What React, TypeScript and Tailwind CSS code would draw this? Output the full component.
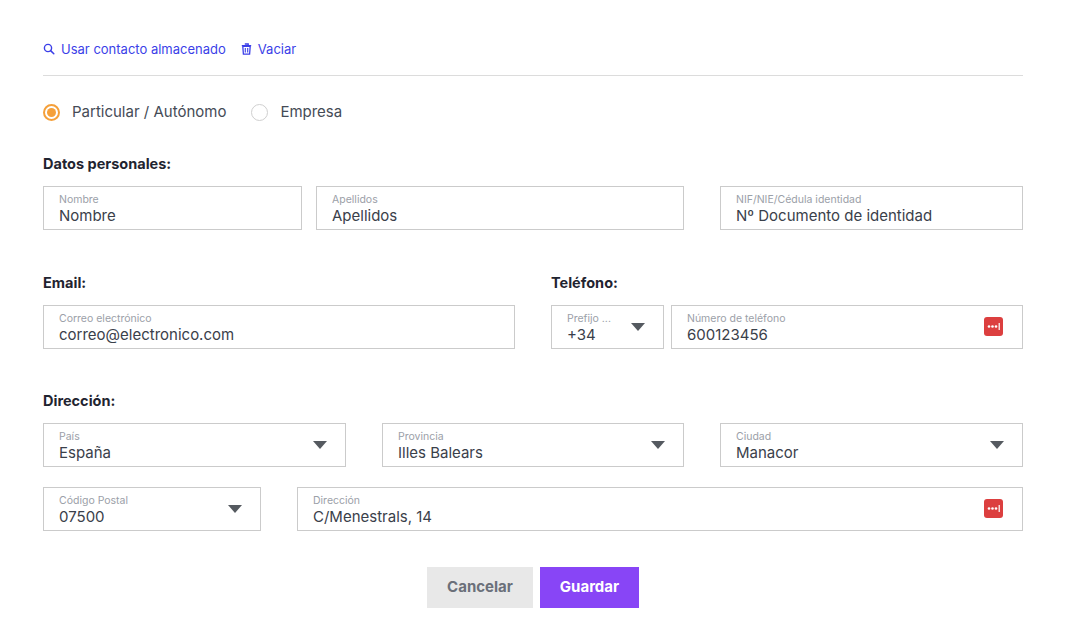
import React, { useState } from "react";

const Caret = () => (
  <svg width="14" height="8" viewBox="0 0 14 8" className="shrink-0">
    <path d="M0 0 H14 L7 8 Z" fill="#555a60" />
  </svg>
);

const KeyIcon = () => (
  <svg width="19" height="19" viewBox="0 0 19 19" className="shrink-0">
    <rect x="0" y="0" width="19" height="19" rx="3" fill="#dc3f3f" />
    <circle cx="5" cy="9.5" r="1.3" fill="#fff" />
    <circle cx="8.5" cy="9.5" r="1.3" fill="#fff" />
    <circle cx="12" cy="9.5" r="1.3" fill="#fff" />
    <rect x="14.6" y="6" width="1.2" height="7" fill="#fff" />
  </svg>
);

const Field = ({
  label,
  value,
  className = "",
  select = false,
  icon = false,
}: {
  label: string;
  value: string;
  className?: string;
  select?: boolean;
  icon?: boolean;
}) => (
  <div
    className={`flex items-center border border-[#cbcbcb] pl-[15px] pr-[18px] h-[44px] ${className}`}
  >
    <div className="flex flex-col min-w-0 flex-1 pt-[3px]">
      <span className="text-[10.5px] leading-[13px] text-[#9ba0a8] truncate">
        {label}
      </span>
      <span className="text-[15px] leading-[20px] text-[#3a404a] truncate">
        {value}
      </span>
    </div>
    {select && <Caret />}
    {icon && <KeyIcon />}
  </div>
);

const Heading = ({ children }: { children: React.ReactNode }) => (
  <h3 className="text-[14.5px] font-bold text-[#1f2430] leading-[20px]">
    {children}
  </h3>
);

export default function App() {
  const [tipo, setTipo] = useState("particular");

  return (
    <div
      className="w-[1065px] h-[628px] bg-white pl-[43px] pr-[42px] pt-[40px]"
      style={{ fontFamily: "Inter, 'Noto Sans', sans-serif" }}
    >
      <div className="flex items-center gap-[15px] text-[13px] text-[#3b3fe8] leading-[18px]">
        <button className="flex items-center gap-[6px]">
          <svg width="12" height="12" viewBox="0 0 12 12">
            <circle cx="5" cy="5" r="3.6" fill="none" stroke="#3b3fe8" strokeWidth="1.4" />
            <path d="M7.6 7.6 L10.8 10.8" stroke="#3b3fe8" strokeWidth="1.5" strokeLinecap="round" />
          </svg>
          Usar contacto almacenado
        </button>
        <button className="flex items-center gap-[6px]">
          <svg width="11" height="12" viewBox="0 0 11 12">
            <path d="M3.8 1 H7.2 V2.2 M0.8 2.6 H10.2" stroke="#3b3fe8" strokeWidth="1.3" fill="none" />
            <path d="M1.8 3.4 H9.2 L8.6 11.2 H2.4 Z" fill="none" stroke="#3b3fe8" strokeWidth="1.3" />
            <path d="M4.3 5 V9.6 M6.7 5 V9.6" stroke="#3b3fe8" strokeWidth="1.1" />
          </svg>
          Vaciar
        </button>
      </div>

      <div className="mt-[17px] border-t border-[#dcdcdc]" />

      <div className="mt-[25px] flex items-center gap-[25px] text-[15px] text-[#454b56]">
        <label className="flex items-center gap-[12px] cursor-pointer" onClick={() => setTipo("particular")}>
          <span
            className={`w-[17px] h-[17px] rounded-full flex items-center justify-center ${
              tipo === "particular" ? "border-2 border-[#f5a03a]" : "border border-[#cfcfcf]"
            }`}
          >
            {tipo === "particular" && <span className="w-[9px] h-[9px] rounded-full bg-[#f5a03a]" />}
          </span>
          Particular / Autónomo
        </label>
        <label className="flex items-center gap-[12px] cursor-pointer" onClick={() => setTipo("empresa")}>
          <span
            className={`w-[17px] h-[17px] rounded-full flex items-center justify-center ${
              tipo === "empresa" ? "border-2 border-[#f5a03a]" : "border border-[#cfcfcf]"
            }`}
          >
            {tipo === "empresa" && <span className="w-[9px] h-[9px] rounded-full bg-[#f5a03a]" />}
          </span>
          Empresa
        </label>
      </div>

      <div className="mt-[30px]">
        <Heading>Datos personales:</Heading>
        <div className="mt-[12px] flex">
          <Field label="Nombre" value="Nombre" className="w-[259px]" />
          <Field label="Apellidos" value="Apellidos" className="w-[368px] ml-[14px]" />
          <Field
            label="NIF/NIE/Cédula identidad"
            value="Nº Documento de identidad"
            className="w-[303px] ml-[36px]"
          />
        </div>
      </div>

      <div className="mt-[43px] flex">
        <div className="w-[472px]">
          <Heading>Email:</Heading>
          <div className="mt-[12px]">
            <Field label="Correo electrónico" value="correo@electronico.com" className="w-[472px]" />
          </div>
        </div>
        <div className="ml-[36px] w-[472px]">
          <Heading>Teléfono:</Heading>
          <div className="mt-[12px] flex">
            <Field label="Prefijo ..." value="+34" select className="w-[113px] pl-[14px] pr-[18px]" />
            <Field
              label="Número de teléfono"
              value="600123456"
              icon
              className="w-[352px] ml-[7px] pl-[14px] pr-[19px]"
            />
          </div>
        </div>
      </div>

      <div className="mt-[42px]">
        <Heading>Dirección:</Heading>
        <div className="mt-[12px] flex">
          <Field label="País" value="España" select className="w-[303px] pr-[10px]" />
          <Field label="Provincia" value="Illes Balears" select className="w-[302px] ml-[36px] pr-[10px]" />
          <Field label="Ciudad" value="Manacor" select className="w-[303px] ml-[36px] pr-[10px]" />
        </div>
        <div className="mt-[20px] flex">
          <Field label="Código Postal" value="07500" select className="w-[218px] pr-[10px]" />
          <Field
            label="Dirección"
            value="C/Menestrals, 14"
            icon
            className="w-[726px] ml-[36px] pr-[19px]"
          />
        </div>
      </div>

      <div className="mt-[36px] flex justify-center gap-[7px]">
        <button className="w-[106px] h-[41px] bg-[#e8e8e8] text-[#6b707a] text-[15px] font-bold">
          Cancelar
        </button>
        <button className="w-[99px] h-[41px] bg-[#8845f6] text-white text-[15px] font-bold">
          Guardar
        </button>
      </div>
    </div>
  );
}
